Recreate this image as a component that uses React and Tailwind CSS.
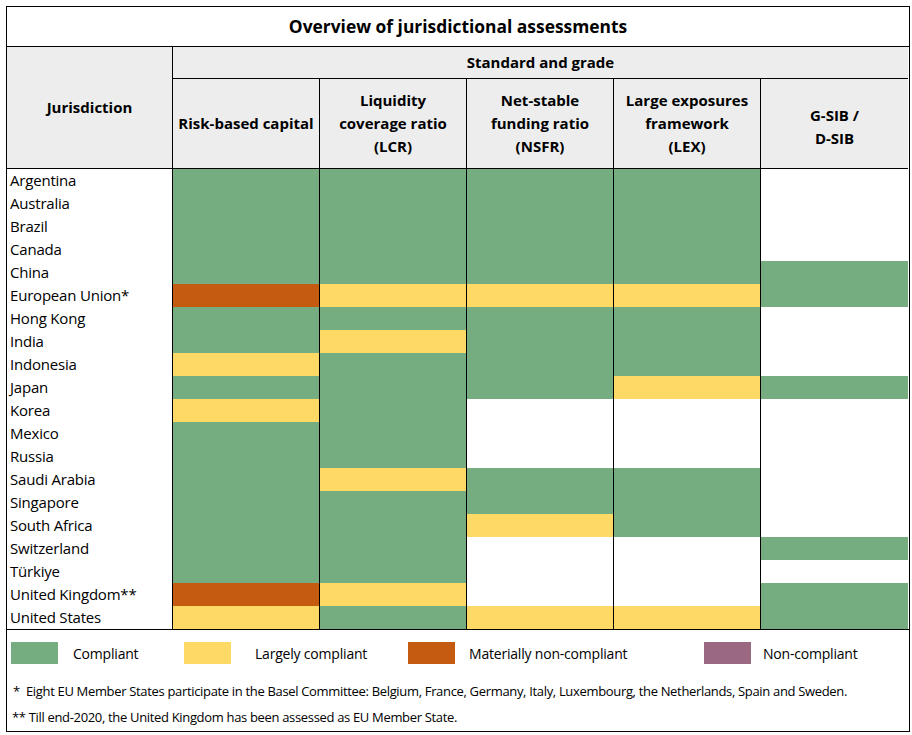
const G = 'bg-[#76ad80]'
const Y = 'bg-[#ffd966]'
const O = 'bg-[#c55a11]'
const W = 'bg-white'

const grade = { G, Y, O, W }

const rows = [
  ['Argentina', 'GGGGW'],
  ['Australia', 'GGGGW'],
  ['Brazil', 'GGGGW'],
  ['Canada', 'GGGGW'],
  ['China', 'GGGGG'],
  ['European Union*', 'OYYYG'],
  ['Hong Kong', 'GGGGW'],
  ['India', 'GYGGW'],
  ['Indonesia', 'YGGGW'],
  ['Japan', 'GGGYG'],
  ['Korea', 'YGWWW'],
  ['Mexico', 'GGWWW'],
  ['Russia', 'GGWWW'],
  ['Saudi Arabia', 'GYGGW'],
  ['Singapore', 'GGGGW'],
  ['South Africa', 'GGYGW'],
  ['Switzerland', 'GGWWG'],
  ['Türkiye', 'GGWWW'],
  ['United Kingdom**', 'OYWWG'],
  ['United States', 'YGYYG']
]

const standards = [
  ['Risk-based capital'],
  ['Liquidity', 'coverage ratio', '(LCR)'],
  ['Net-stable', 'funding ratio', '(NSFR)'],
  ['Large exposures', 'framework', '(LEX)'],
  ['G-SIB /', 'D-SIB']
]

const legend = [
  { label: 'Compliant', swatch: G, w: 'w-[173px]', gap: 'ml-[15px]' },
  { label: 'Largely compliant', swatch: Y, w: 'w-[224px]', gap: 'ml-[24px]' },
  { label: 'Materially non-compliant', swatch: O, w: 'w-[296px]', gap: 'ml-[14px]' },
  { label: 'Non-compliant', swatch: 'bg-[#9a6880]', w: 'w-[180px]', gap: 'ml-[12px]' }
]

export default function App() {
  return (
    <div className="min-h-[735px] bg-white pl-[6px] pt-[6px] font-['Segoe_UI','Open_Sans',sans-serif] text-black">
      <div className="w-[904px] border-[1.5px] border-black">
        <div className="flex h-[40px] items-center justify-center border-b border-black text-[17.4px] font-bold">
          Overview of jurisdictional assessments
        </div>

        <div className="grid grid-cols-[166px_147px_147px_147px_147px_147px]">
          {/* header */}
          <div className="row-span-2 flex items-center justify-center border-r border-b border-black bg-[#ededed] text-[15px] font-bold">
            Jurisdiction
          </div>
          <div className="col-span-5 flex h-[32px] items-center justify-center border-b border-black bg-[#ededed] text-[15px] font-bold">
            Standard and grade
          </div>
          {standards.map((lines, i) => (
            <div
              key={i}
              className={`flex h-[90px] flex-col items-center justify-center border-b border-black bg-[#ededed] text-center text-[15px] font-bold leading-[23px] ${i < 4 ? 'border-r' : ''} ${i === 4 ? 'pt-[6px]' : ''}`}
            >
              {lines.map((l) => (
                <span key={l}>{l}</span>
              ))}
            </div>
          ))}

          {/* body */}
          {rows.map(([name, grades]) => (
            <div key={name} className="contents">
              <div className="h-[23px] border-r border-black pl-[3px] text-[15px] leading-[23px] tracking-[-0.2px]">{name}</div>
              {grades.split('').map((g, j) => (
                <div key={j} className={`h-[23px] ${grade[g]} ${j < 4 ? 'border-r border-black' : ''}`} />
              ))}
            </div>
          ))}
        </div>

        <div className="border-t border-black pb-[1px] pl-[4px] pt-[12px]">
          <div className="flex h-[22px] items-center">
            {legend.map((item) => (
              <div key={item.label} className={`flex items-center ${item.w}`}>
                <div className={`h-[22px] w-[47px] ${item.swatch}`} />
                <span className={`${item.gap} text-[14px] tracking-[-0.2px]`}>{item.label}</span>
              </div>
            ))}
          </div>
          <div className="mt-[14px] whitespace-nowrap text-[13px] leading-[26px] tracking-[-0.33px]">
            <p className="pl-[2px]">*&nbsp; Eight EU Member States participate in the Basel Committee: Belgium, France, Germany, Italy, Luxembourg, the Netherlands, Spain and Sweden.</p>
            <p className="pl-[1px]">** Till end-2020, the United Kingdom has been assessed as EU Member State.</p>
          </div>
        </div>
      </div>
    </div>
  )
}
